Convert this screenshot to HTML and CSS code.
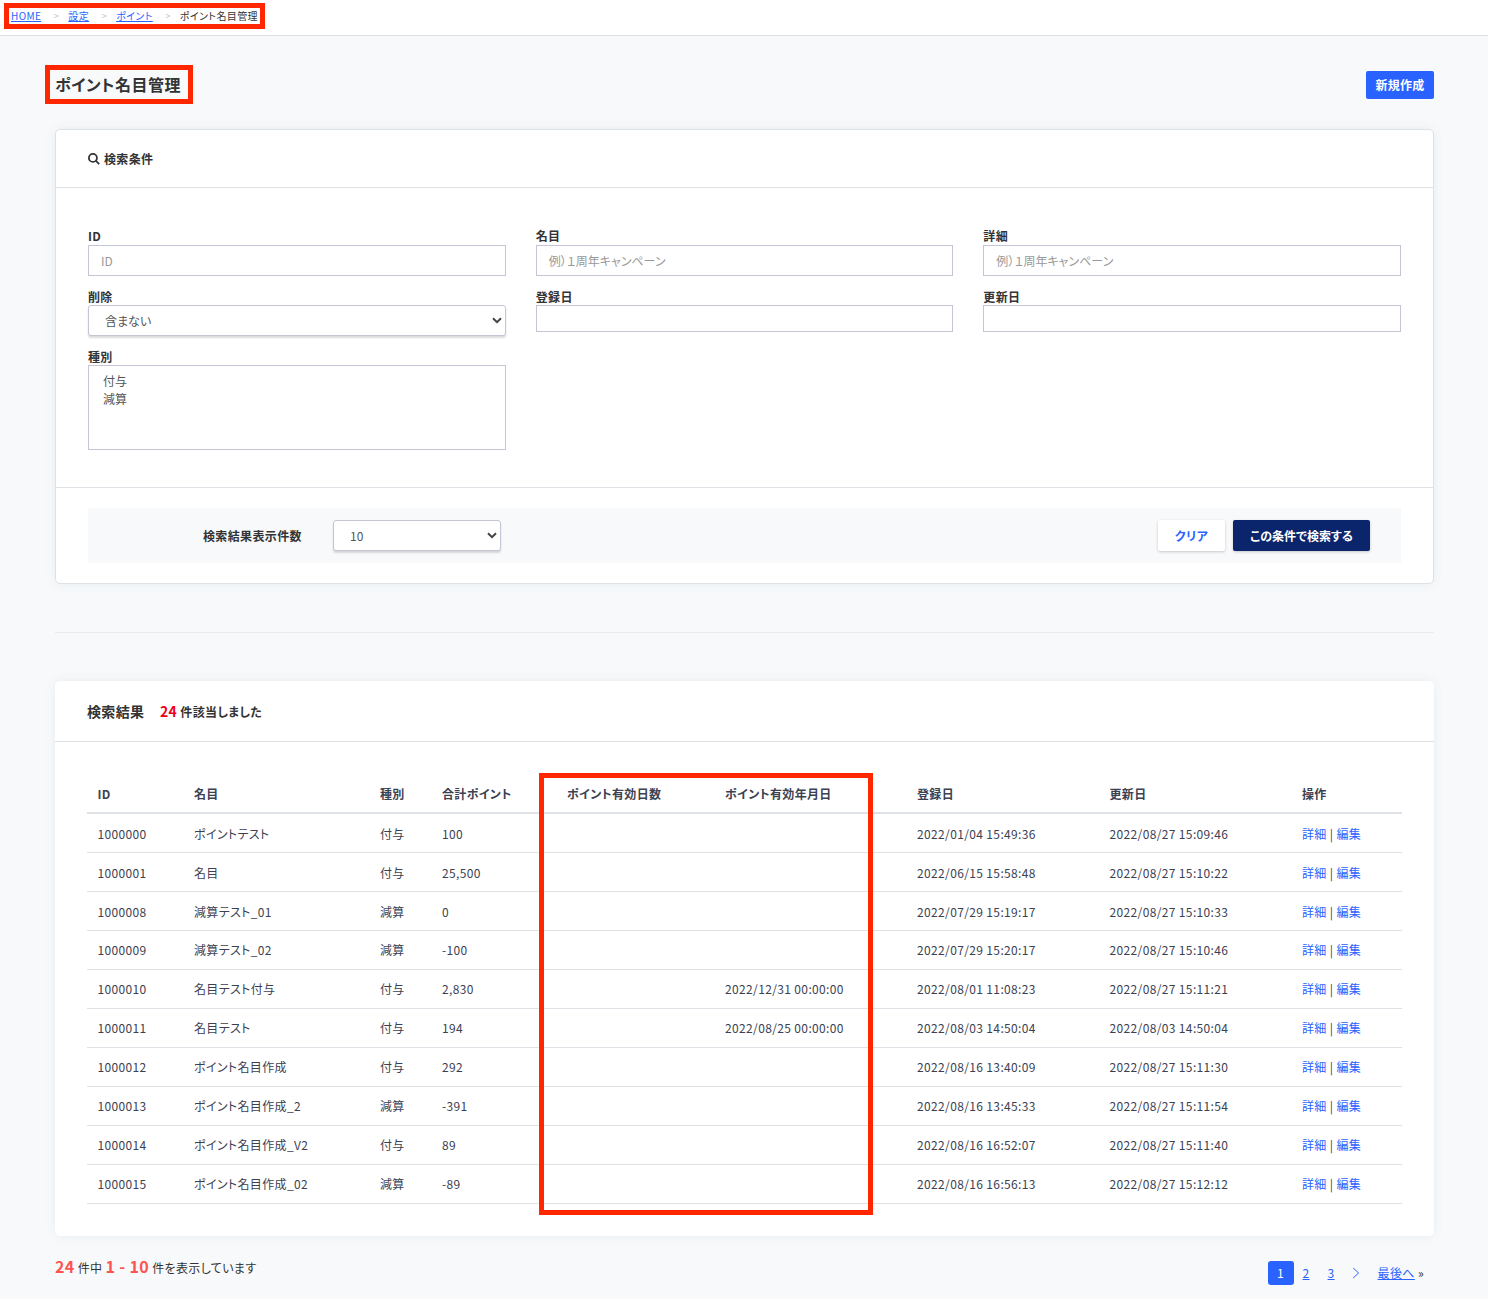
FILE: index.html
```html
<!DOCTYPE html>
<html lang="ja">
<head>
  <meta charset="UTF-8">
  <meta name="viewport" content="width=device-width, initial-scale=1.0">
  <title>ポイント名目管理</title>
  <link rel="stylesheet" href="styles.css">
</head>
<body>
  <nav class="breadcrumb">
    <a href="#">HOME</a><span class="sep">&gt;</span>
    <a href="#">設定</a><span class="sep">&gt;</span>
    <a href="#">ポイント</a><span class="sep">&gt;</span>
    <span class="current">ポイント名目管理</span>
    <div class="marker marker-nav"></div>
  </nav>

  <main class="container">
    <div class="page-head">
      <h1>ポイント名目管理<span class="marker marker-title"></span></h1>
      <a class="btn btn-new" href="#">新規作成</a>
    </div>

    <form class="card search">
      <div class="card-head">
        <svg class="icon-search" viewBox="0 0 12 12"><circle cx="4.9" cy="4.9" r="4"/><path d="M7.7 7.7 11.2 11.2"/></svg>
        <h2>検索条件</h2>
      </div>
      <div class="fields">
        <div class="field first">
          <label>ID</label>
          <input type="text" placeholder="ID">
        </div>
        <div class="field first">
          <label>名目</label>
          <input type="text" placeholder="例）１周年キャンペーン">
        </div>
        <div class="field first">
          <label>詳細</label>
          <input type="text" placeholder="例）１周年キャンペーン">
        </div>
        <div class="field">
          <label>削除</label>
          <div class="select"><span>含まない</span><svg class="chevron" viewBox="0 0 10 7"><path d="M1 1.2 5 5.2 9 1.2"/></svg></div>
        </div>
        <div class="field">
          <label>登録日</label>
          <input class="date" type="text">
        </div>
        <div class="field">
          <label>更新日</label>
          <input class="date" type="text">
        </div>
        <div class="field">
          <label>種別</label>
          <ul class="listbox">
            <li>付与</li>
            <li>減算</li>
          </ul>
        </div>
      </div>
      <div class="card-foot">
        <div class="actions">
          <span class="count-label">検索結果表示件数</span>
          <div class="select count"><span>10</span><svg class="chevron" viewBox="0 0 10 7"><path d="M1 1.2 5 5.2 9 1.2"/></svg></div>
          <button class="btn btn-clear" type="button">クリア</button>
          <button class="btn btn-search" type="button">この条件で検索する</button>
        </div>
      </div>
    </form>

    <hr>

    <section class="card result">
      <div class="card-head">
        <h2>検索結果</h2>
        <p class="hit"><b>24</b> 件該当しました</p>
      </div>
      <div class="table-wrap">
        <table>
          <colgroup>
            <col class="c-id"><col class="c-name"><col class="c-type"><col class="c-total"><col class="c-days">
            <col class="c-limit"><col class="c-created"><col class="c-updated"><col class="c-ops">
          </colgroup>
          <thead>
            <tr><th>ID</th><th>名目</th><th>種別</th><th>合計ポイント</th><th>ポイント有効日数</th><th>ポイント有効年月日</th><th>登録日</th><th>更新日</th><th>操作</th></tr>
          </thead>
          <tbody>
            <tr><td>1000000</td><td>ポイントテスト</td><td>付与</td><td>100</td><td></td><td></td><td>2022/01/04 15:49:36</td><td>2022/08/27 15:09:46</td><td><a href="#">詳細</a> | <a href="#">編集</a></td></tr>
            <tr><td>1000001</td><td>名目</td><td>付与</td><td>25,500</td><td></td><td></td><td>2022/06/15 15:58:48</td><td>2022/08/27 15:10:22</td><td><a href="#">詳細</a> | <a href="#">編集</a></td></tr>
            <tr><td>1000008</td><td>減算テスト_01</td><td>減算</td><td>0</td><td></td><td></td><td>2022/07/29 15:19:17</td><td>2022/08/27 15:10:33</td><td><a href="#">詳細</a> | <a href="#">編集</a></td></tr>
            <tr><td>1000009</td><td>減算テスト_02</td><td>減算</td><td>-100</td><td></td><td></td><td>2022/07/29 15:20:17</td><td>2022/08/27 15:10:46</td><td><a href="#">詳細</a> | <a href="#">編集</a></td></tr>
            <tr><td>1000010</td><td>名目テスト付与</td><td>付与</td><td>2,830</td><td></td><td>2022/12/31 00:00:00</td><td>2022/08/01 11:08:23</td><td>2022/08/27 15:11:21</td><td><a href="#">詳細</a> | <a href="#">編集</a></td></tr>
            <tr><td>1000011</td><td>名目テスト</td><td>付与</td><td>194</td><td></td><td>2022/08/25 00:00:00</td><td>2022/08/03 14:50:04</td><td>2022/08/03 14:50:04</td><td><a href="#">詳細</a> | <a href="#">編集</a></td></tr>
            <tr><td>1000012</td><td>ポイント名目作成</td><td>付与</td><td>292</td><td></td><td></td><td>2022/08/16 13:40:09</td><td>2022/08/27 15:11:30</td><td><a href="#">詳細</a> | <a href="#">編集</a></td></tr>
            <tr><td>1000013</td><td>ポイント名目作成_2</td><td>減算</td><td>-391</td><td></td><td></td><td>2022/08/16 13:45:33</td><td>2022/08/27 15:11:54</td><td><a href="#">詳細</a> | <a href="#">編集</a></td></tr>
            <tr><td>1000014</td><td>ポイント名目作成_V2</td><td>付与</td><td>89</td><td></td><td></td><td>2022/08/16 16:52:07</td><td>2022/08/27 15:11:40</td><td><a href="#">詳細</a> | <a href="#">編集</a></td></tr>
            <tr><td>1000015</td><td>ポイント名目作成_02</td><td>減算</td><td>-89</td><td></td><td></td><td>2022/08/16 16:56:13</td><td>2022/08/27 15:12:12</td><td><a href="#">詳細</a> | <a href="#">編集</a></td></tr>
          </tbody>
        </table>
        <div class="marker marker-table"></div>
      </div>
    </section>

    <div class="pager">
      <p class="range"><b>24</b> 件中 <b>1 - 10</b> 件を表示しています</p>
      <div class="pages">
        <span class="page active">1</span>
        <a class="page" href="#">2</a>
        <a class="page" href="#">3</a>
        <a class="next" href="#"><svg viewBox="0 0 8 12"><path d="M1.2 1 6.6 6 1.2 11"/></svg></a>
        <span class="last"><a href="#">最後へ</a> »</span>
      </div>
    </div>
  </main>
</body>
</html>
```
FILE: styles.css
```css
* {
  box-sizing: border-box;
}

body {
  margin: 0;
  height: 1299px;
  overflow: hidden;
  background: #f8f9fb;
  color: #333;
  font-family: "Noto Sans CJK JP", sans-serif;
  font-size: 12px;
  font-feature-settings: "palt";
  letter-spacing: 0.36px;
  line-height: 18px;
}

a {
  color: #2962ff;
}

h1, h2, p, ul {
  margin: 0;
  padding: 0;
}

/* breadcrumb */
.breadcrumb {
  position: relative;
  display: flex;
  align-items: center;
  height: 36px;
  padding: 0 0 4px 11px;
  background: #fff;
  border-bottom: 1px solid #dee2e6;
  font-size: 10px;
  letter-spacing: 0.4px;
}

.breadcrumb .sep {
  width: 27px;
  padding-left: 4px;
  text-align: center;
  color: #b8bcc8;
  font-size: 9px;
}

/* red frames */
.marker {
  position: absolute;
  border: 5px solid #ff2600;
  pointer-events: none;
}

.marker-nav {
  left: 4px;
  top: 3px;
  width: 261px;
  height: 26px;
}

.marker-title {
  left: -10px;
  top: -7px;
  width: 148px;
  height: 39px;
}

.marker-table {
  left: 484px;
  top: 31px;
  width: 334px;
  height: 442px;
}

.container {
  width: 1379px;
  margin-left: 55px;
}

.page-head {
  display: flex;
  justify-content: space-between;
  align-items: center;
  height: 28px;
  margin: 35px 0 30px;
}

h1 {
  position: relative;
  padding-bottom: 2px;
  font-size: 16px;
  font-weight: 700;
  line-height: 24px;
  letter-spacing: 0.5px;
}

.btn {
  border: 0;
  border-radius: 2px;
  font-family: inherit;
  font-size: 12px;
  font-weight: 700;
  font-feature-settings: inherit;
  letter-spacing: 0.3px;
  text-align: center;
  text-decoration: none;
}

.btn-new {
  width: 68px;
  height: 28px;
  line-height: 28px;
  background: #2962ff;
  color: #fff;
}

/* cards */
.card {
  background: #fff;
  border-radius: 5px;
  box-shadow: 0 0 12px rgba(0, 80, 80, 0.07);
}

.card-head {
  display: flex;
  align-items: center;
  border-bottom: 1px solid #dee2e6;
}

.card-head h2 {
  font-weight: 700;
}

.search {
  height: 455px;
  border: 1px solid #dee2e6;
}

.search .card-head {
  height: 58px;
  padding: 0 32px;
}

.search h2 {
  font-size: 12px;
}

.icon-search {
  width: 12px;
  height: 12px;
  margin-right: 4px;
  fill: none;
  stroke: #333;
  stroke-width: 1.8;
}

.fields {
  display: grid;
  grid-template-columns: repeat(3, 1fr);
  grid-template-rows: 60px 60px 101px;
  column-gap: 30px;
  height: 299px;
  padding: 41px 32px 0;
}

.field {
  display: flex;
  flex-direction: column;
}

.field label {
  height: 16px;
  line-height: 16px;
  font-weight: 700;
}

.field.first label {
  line-height: 14px;
}

.field input {
  height: 31px;
  padding: 0 12px 1px;
  border: 1px solid #c5c5d6;
  font: inherit;
  font-feature-settings: inherit;
  letter-spacing: 0;
}

.field input::placeholder {
  color: #999;
}

.field input.date {
  height: 27px;
}

.select {
  display: flex;
  align-items: center;
  justify-content: space-between;
  height: 31px;
  padding: 1px 3px 0 16px;
  background: #fff;
  border: 1px solid #c5c5d6;
  border-radius: 3px;
  box-shadow: 0 2px 2px rgba(0, 0, 0, 0.14);
  color: #555;
  letter-spacing: 0;
}

.chevron {
  width: 10px;
  height: 7px;
  margin-bottom: 2px;
  fill: none;
  stroke: #444;
  stroke-width: 2;
}

.listbox {
  height: 85px;
  padding: 6px 14px;
  border: 1px solid #c5c5d6;
  color: #555;
  list-style: none;
  letter-spacing: 0;
}

.card-foot {
  padding: 20px 32px;
  border-top: 1px solid #dee2e6;
}

.actions {
  display: flex;
  align-items: center;
  height: 55px;
  padding: 0 31px 0 115px;
  background: #f8f9fb;
}

.count-label {
  width: 130px;
  font-weight: 700;
}

.count {
  width: 168px;
}

.btn-clear {
  width: 67px;
  height: 31px;
  margin-left: auto;
  background: #fff;
  color: #2962ff;
  box-shadow: 0 1px 3px rgba(0, 0, 0, 0.2);
}

.btn-search {
  width: 137px;
  height: 31px;
  margin-left: 8px;
  background: #0a256c;
  color: #fff;
  letter-spacing: 0;
  box-shadow: 0 1px 3px rgba(0, 0, 0, 0.2);
}

hr {
  height: 1px;
  margin: 48px 0;
  border: 0;
  background: #e9ecef;
}

/* result table */
.result {
  height: 555px;
}

.result .card-head {
  height: 61px;
  padding: 1px 32px 0;
}

.result h2 {
  width: 73px;
  padding-bottom: 2px;
  font-size: 14px;
  letter-spacing: 0.35px;
}

.hit {
  font-weight: 700;
}

.hit b {
  color: #f00016;
  font-size: 14px;
  font-weight: 700;
}

.table-wrap {
  position: relative;
  padding: 33px 32px 0;
}

table {
  width: 1315px;
  table-layout: fixed;
  border-collapse: separate;
  border-spacing: 0;
  color: #3c4152;
}

.c-id { width: 96.5px; }
.c-name { width: 186px; }
.c-type { width: 62px; }
.c-total { width: 125px; }
.c-days { width: 158px; }
.c-limit { width: 192px; }
.c-created { width: 192.5px; }
.c-updated { width: 192.5px; }

th, td {
  height: 39px;
  padding: 2px 0 0 10.5px;
  border-bottom: 1px solid #dee2e6;
  font-weight: 400;
  text-align: left;
  white-space: nowrap;
}

th {
  padding-top: 1px;
  border-bottom-width: 2px;
  font-weight: 700;
}

tbody tr:nth-child(n+4) td {
  padding-top: 0;
}

td a {
  text-decoration: none;
}

/* pagination */
.pager {
  display: flex;
  justify-content: space-between;
  padding-top: 18px;
}

.range {
  line-height: 24px;
}

.range b {
  color: #ff5252;
  font-size: 16px;
  font-weight: 700;
}

.pages {
  display: flex;
  align-items: center;
  height: 24px;
  margin-top: 7px;
  padding-right: 10px;
}

.page {
  width: 25px;
  text-align: center;
}

.page.active {
  width: 26px;
  height: 24px;
  line-height: 24px;
  border-radius: 3px;
  background: #2962ff;
  color: #fff;
}

.next {
  display: flex;
  justify-content: center;
  width: 25px;
}

.next svg {
  width: 8px;
  height: 12px;
  fill: none;
  stroke: #2962ff;
  stroke-width: 1;
}

.last {
  margin-left: 9px;
}
```
